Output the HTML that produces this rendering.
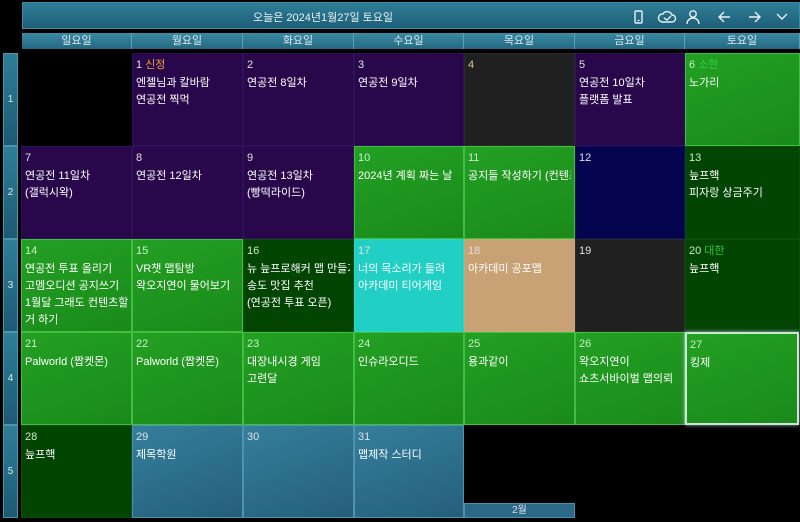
<!DOCTYPE html>
<html><head><meta charset="utf-8"><style>
*{margin:0;padding:0;box-sizing:border-box}
body{width:800px;height:522px;background:#000;position:relative;overflow:hidden;font-family:"Liberation Sans","Noto Sans CJK KR",sans-serif;color:#fff;font-size:11px}
.hd{position:absolute;left:22px;top:2px;width:778px;height:27px;background:linear-gradient(180deg,#2f7e96,#1d5f78);border:1px solid #3d8ca3}
.hd .t{position:absolute;left:0;width:600px;top:6px;text-align:center;font-size:11px;color:#e8f2f6}
.dh{position:absolute;top:33px;height:16px;background:linear-gradient(180deg,#3a8aa4,#246880);border-right:1px solid #5aa0b8;text-align:center;font-size:11px;line-height:16px;color:#d8e8ee}
.wk{position:absolute;left:3px;width:15px;background:linear-gradient(180deg,#2e7e98,#1c5a72);border:1px solid #4a94ac;text-align:center;font-size:10px;color:#d8e8ee}
.c{position:absolute;padding:4px 3px;border:1px solid rgba(255,255,255,0.05)}
.c .n{font-size:11px;color:#e0e0e0;height:17px;line-height:14px}
.c .e{font-size:11px;line-height:17px;white-space:nowrap;overflow:hidden}
.p{background:#28084a;border-color:#30105a}.g{background:linear-gradient(160deg,#23a023,#1a8a1a);border-color:#3fc03f}.dg{background:#024402}.k{background:#202020}.nv{background:#03034e}
.tq{background:#22cfc4}.tn{background:#c8a274}.bl{background:linear-gradient(160deg,#347f9c,#255f7a);border-color:#4f94ae}
.g .n,.dg .n{color:#c8f0c8}
</style></head><body>
<div class="hd"><div class="t">오늘은 2024년1월27일 토요일</div>
<svg style="position:absolute;left:606px;top:5px" width="170" height="18" fill="none" stroke="#e8f2f6" stroke-width="1.4">
<rect x="6" y="3" width="7" height="12" rx="1"/><line x1="8.5" y1="12.5" x2="10.5" y2="12.5"/>
<path d="M33 14h10a3.5 3.5 0 0 0 0-7 5 5 0 0 0-9-1 4 4 0 0 0-1 8z"/><path d="M35 10l3 2 4-4"/>
<circle cx="64" cy="6" r="3.2"/><path d="M58 16a6 6 0 0 1 12 0"/>
<path d="M101 9h-10M95 4l-5 5 5 5"/>
<path d="M120 9h10M126 4l5 5-5 5"/>
<path d="M148 6l5 5 5-5"/>
</svg></div>
<div class="dh" style="left:22px;width:110px">일요일</div>
<div class="dh" style="left:132px;width:111px">월요일</div>
<div class="dh" style="left:243px;width:111px">화요일</div>
<div class="dh" style="left:354px;width:110px">수요일</div>
<div class="dh" style="left:464px;width:111px">목요일</div>
<div class="dh" style="left:575px;width:110px">금요일</div>
<div class="dh" style="left:685px;width:115px">토요일</div>
<div class="wk" style="top:53px;height:93px;line-height:91px">1</div>
<div class="wk" style="top:146px;height:93px;line-height:91px">2</div>
<div class="wk" style="top:239px;height:93px;line-height:91px">3</div>
<div class="wk" style="top:332px;height:93px;line-height:91px">4</div>
<div class="wk" style="top:425px;height:93px;line-height:91px">5</div>

<div class="c p" style="left:132px;top:53px;width:111px;height:93px"><div class="n">1 <span style="color:#f0a040">신정</span></div><div class="e">엔젤님과 칼바람</div><div class="e">연공전 찍먹</div></div>
<div class="c p" style="left:243px;top:53px;width:111px;height:93px"><div class="n">2</div><div class="e">연공전 8일차</div></div>
<div class="c p" style="left:354px;top:53px;width:110px;height:93px"><div class="n">3</div><div class="e">연공전 9일차</div></div>
<div class="c k" style="left:464px;top:53px;width:111px;height:93px"><div class="n" style="color:#d8c890">4</div></div>
<div class="c p" style="left:575px;top:53px;width:110px;height:93px"><div class="n">5</div><div class="e">연공전 10일차</div><div class="e">플랫폼 발표</div></div>
<div class="c g" style="left:685px;top:53px;width:115px;height:93px"><div class="n">6 <span style="color:#30d040">소한</span></div><div class="e">노가리</div></div>

<div class="c p" style="left:21px;top:146px;width:111px;height:93px"><div class="n">7</div><div class="e">연공전 11일차</div><div class="e">(갤럭시왁)</div></div>
<div class="c p" style="left:132px;top:146px;width:111px;height:93px"><div class="n">8</div><div class="e">연공전 12일차</div></div>
<div class="c p" style="left:243px;top:146px;width:111px;height:93px"><div class="n">9</div><div class="e">연공전 13일차</div><div class="e">(빵떡라이드)</div></div>
<div class="c g" style="left:354px;top:146px;width:110px;height:93px"><div class="n">10</div><div class="e">2024년 계획 짜는 날</div></div>
<div class="c g" style="left:464px;top:146px;width:111px;height:93px"><div class="n">11</div><div class="e">공지들 작성하기 (컨텐츠</div></div>
<div class="c nv" style="left:575px;top:146px;width:110px;height:93px"><div class="n">12</div></div>
<div class="c dg" style="left:685px;top:146px;width:115px;height:93px"><div class="n">13</div><div class="e">늪프핵</div><div class="e">피자랑 상금주기</div></div>

<div class="c g" style="left:21px;top:239px;width:111px;height:93px"><div class="n">14</div><div class="e">연공전 투표 올리기</div><div class="e">고멤오디션 공지쓰기</div><div class="e">1월달 그래도 컨텐츠할</div><div class="e">거 하기</div></div>
<div class="c g" style="left:132px;top:239px;width:111px;height:93px"><div class="n">15</div><div class="e">VR챗 맵탐방</div><div class="e">왁오지연이 물어보기</div></div>
<div class="c dg" style="left:243px;top:239px;width:111px;height:93px"><div class="n">16</div><div class="e">뉴 늪프로해커 맵 만들기</div><div class="e">송도 맛집 추천</div><div class="e">(연공전 투표 오픈)</div></div>
<div class="c tq" style="left:354px;top:239px;width:110px;height:93px"><div class="n">17</div><div class="e">너의 목소리가 들려</div><div class="e">아카데미 티어게임</div></div>
<div class="c tn" style="left:464px;top:239px;width:111px;height:93px"><div class="n">18</div><div class="e">아카데미 공포맵</div></div>
<div class="c k" style="left:575px;top:239px;width:110px;height:93px"><div class="n">19</div></div>
<div class="c dg" style="left:685px;top:239px;width:115px;height:93px"><div class="n">20 <span style="color:#30c040">대한</span></div><div class="e">늪프핵</div></div>

<div class="c g" style="left:21px;top:332px;width:111px;height:93px"><div class="n">21</div><div class="e">Palworld (짭켓몬)</div></div>
<div class="c g" style="left:132px;top:332px;width:111px;height:93px"><div class="n">22</div><div class="e">Palworld (짭켓몬)</div></div>
<div class="c g" style="left:243px;top:332px;width:111px;height:93px"><div class="n">23</div><div class="e">대장내시경 게임</div><div class="e">고련달</div></div>
<div class="c g" style="left:354px;top:332px;width:110px;height:93px"><div class="n">24</div><div class="e">인슈라오디드</div></div>
<div class="c g" style="left:464px;top:332px;width:111px;height:93px"><div class="n">25</div><div class="e">용과같이</div></div>
<div class="c g" style="left:575px;top:332px;width:110px;height:93px"><div class="n">26</div><div class="e">왁오지연이</div><div class="e">쇼츠서바이벌 맵의뢰</div></div>
<div class="c g" style="left:685px;top:332px;width:114px;height:93px;border:2px solid #c8e8d0;box-shadow:0 0 4px #aac"><div class="n">27</div><div class="e">킹제</div></div>

<div class="c dg" style="left:21px;top:425px;width:111px;height:93px"><div class="n">28</div><div class="e">늪프핵</div></div>
<div class="c bl" style="left:132px;top:425px;width:111px;height:93px"><div class="n">29</div><div class="e">제목학원</div></div>
<div class="c bl" style="left:243px;top:425px;width:111px;height:93px"><div class="n">30</div></div>
<div class="c bl" style="left:354px;top:425px;width:110px;height:93px"><div class="n">31</div><div class="e">맵제작 스터디</div></div>
<div style="position:absolute;left:464px;top:503px;width:111px;height:15px;background:#2a6a88;border:1px solid #4a90aa;text-align:center;font-size:10px;line-height:13px;color:#dde">2월</div>
</body></html>
